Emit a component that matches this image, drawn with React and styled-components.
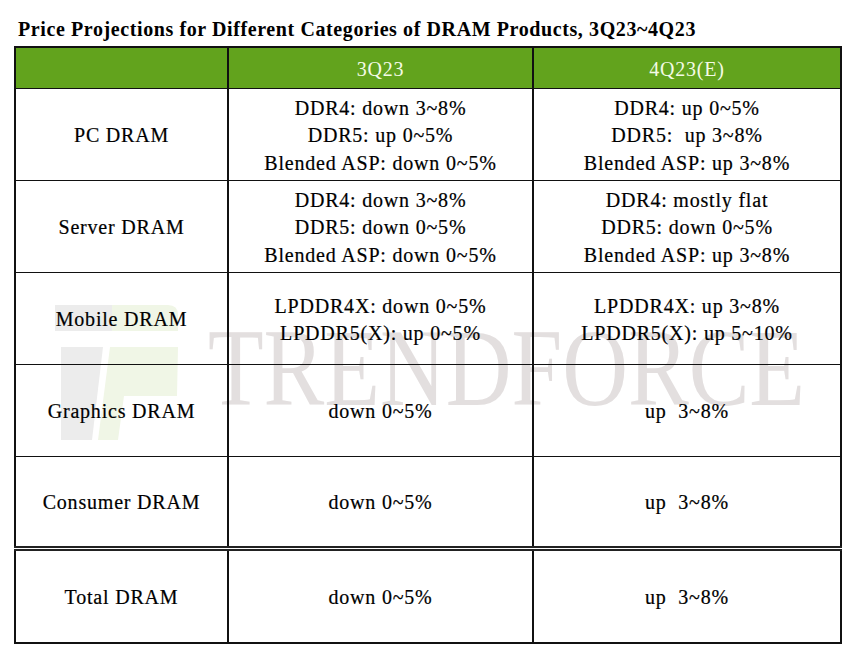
import React from 'react';
import styled, { createGlobalStyle } from 'styled-components';

const GlobalStyle = createGlobalStyle`
  html, body {
    margin: 0;
    padding: 0;
    background: #ffffff;
  }
  body {
    font-family: "Liberation Serif", "Times New Roman", serif;
    color: #000;
  }
`;

const Page = styled.div`
  width: 858px;
  height: 649px;
  padding-left: 14px;
  box-sizing: border-box;
  font-family: "Liberation Serif", "Times New Roman", serif;
`;

const Title = styled.h1`
  margin: 17px 0 0 4px;
  height: 29px;
  font-family: "Liberation Serif", "Times New Roman", serif;
  font-size: 20px;
  line-height: 24px;
  font-weight: bold;
  letter-spacing: 0.6px;
  white-space: nowrap;
`;

const Frame = styled.div`
  position: relative;
  width: 826px;
`;

const Watermark = styled.svg`
  position: absolute;
  left: 40px;
  top: 254px;
  z-index: 0;
  pointer-events: none;
`;

const Table = styled.table`
  position: relative;
  z-index: 1;
  width: 826px;
  table-layout: fixed;
  border-collapse: collapse;
  border: 2px solid #111;
  font-family: "Liberation Serif", "Times New Roman", serif;
  font-size: 20px;
  letter-spacing: 0.8px;
  line-height: 27.5px;
  text-align: center;
  color: #000;
`;

const HeadCell = styled.th`
  height: 37px;
  padding: 3px 0 0;
  background: #62a31d;
  color: #f4fbe6;
  font-weight: normal;
  border: 2px solid #111;
  border-bottom-width: 1.5px;
`;

const Row = styled.tr`
  height: ${(p) => p.$h}px;
  border-top: ${(p) => (p.$double ? '5px double #222' : '1.5px solid #111')};
`;

const Cell = styled.td`
  padding: 3px 0 0;
  vertical-align: middle;
  border-left: 2px solid #111;
  border-right: 2px solid #111;
  white-space: nowrap;
  -webkit-text-stroke: 0.2px #000;
`;

const Line = styled.div`
  display: block;
`;

const rows = [
  {
    name: 'PC DRAM',
    q3: ['DDR4: down 3~8%', 'DDR5: up 0~5%', 'Blended ASP: down 0~5%'],
    q4: ['DDR4: up 0~5%', 'DDR5:  up 3~8%', 'Blended ASP: up 3~8%'],
  },
  {
    name: 'Server DRAM',
    q3: ['DDR4: down 3~8%', 'DDR5: down 0~5%', 'Blended ASP: down 0~5%'],
    q4: ['DDR4: mostly flat', 'DDR5: down 0~5%', 'Blended ASP: up 3~8%'],
  },
  {
    name: 'Mobile DRAM',
    q3: ['LPDDR4X: down 0~5%', 'LPDDR5(X): up 0~5%'],
    q4: ['LPDDR4X: up 3~8%', 'LPDDR5(X): up 5~10%'],
  },
  { name: 'Graphics DRAM', q3: ['down 0~5%'], q4: ['up\u00a0 3~8%'] },
  { name: 'Consumer DRAM', q3: ['down 0~5%'], q4: ['up\u00a0 3~8%'] },
  { name: 'Total DRAM', q3: ['down 0~5%'], q4: ['up\u00a0 3~8%'], double: true },
];

const Lines = ({ items }) => items.map((t) => <Line key={t}>{t.replace(/  /g, '\u00a0 ')}</Line>);

const App = () => (
  <Page>
    <GlobalStyle />
    <Title>Price Projections for Different Categories of DRAM Products, 3Q23~4Q23</Title>
    <Frame>
      <Watermark width="780" height="180" viewBox="0 0 780 180" aria-hidden="true">
        <path d="M1 5 H58 V31 H1 Z" fill="#ececec" />
        <path d="M58 5 H114 Q124 5 124 15 V31 H58 Z" fill="#f0f6e6" />
        <path d="M7 47 H49 L38 140 H7 Z" fill="#ececec" />
        <path d="M56 47 H124 L123 96 H70 L64 140 H44 Z" fill="#f0f6e6" />
        <text
          x="154"
          y="105"
          fontFamily="Liberation Serif, serif"
          fontSize="110"
          fill="#e3dfdf"
          textLength="597"
          lengthAdjust="spacingAndGlyphs"
        >
          TRENDFORCE
        </text>
      </Watermark>
      <Table>
        <colgroup>
          <col style={{ width: 213 }} />
          <col style={{ width: 305 }} />
          <col style={{ width: 308 }} />
        </colgroup>
        <thead>
          <tr>
            <HeadCell />
            <HeadCell>3Q23</HeadCell>
            <HeadCell>4Q23(E)</HeadCell>
          </tr>
        </thead>
        <tbody>
          {rows.map((r) => (
            <Row key={r.name} $h={r.double ? 94 : 92} $double={r.double}>
              <Cell>{r.name}</Cell>
              <Cell>
                <Lines items={r.q3} />
              </Cell>
              <Cell>
                <Lines items={r.q4} />
              </Cell>
            </Row>
          ))}
        </tbody>
      </Table>
    </Frame>
  </Page>
);

export default App;
